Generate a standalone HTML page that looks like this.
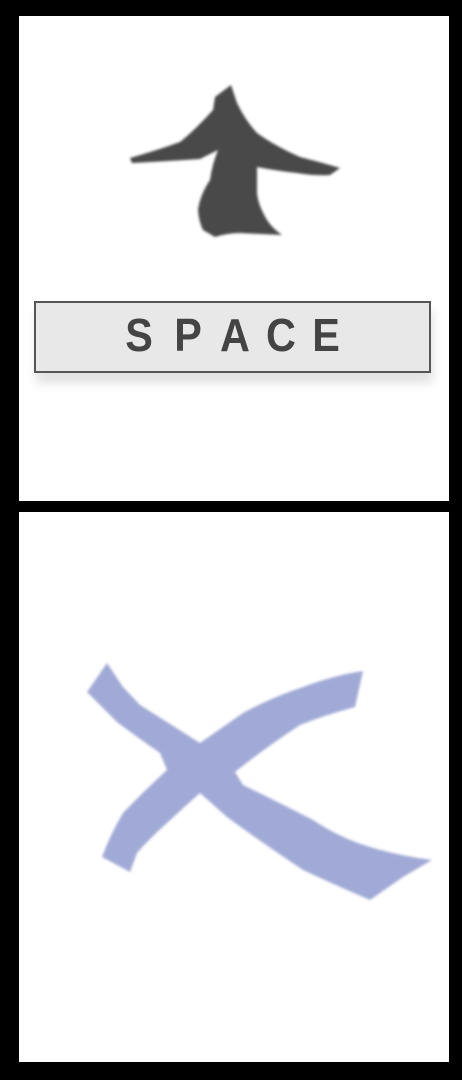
<!DOCTYPE html>
<html><head><style>
html,body{margin:0;padding:0;background:#000;width:462px;height:1080px;overflow:hidden;position:relative}
.p{position:absolute;background:#fff}
.btn{position:absolute;left:34px;top:301px;width:393px;height:68px;background:#e8e8e8;border:2px solid #555;box-shadow:2px 10px 10px rgba(0,0,0,0.12)}
.l{position:absolute;top:9px;width:40px;margin-left:-20px;text-align:center;font-family:"Liberation Sans",sans-serif;font-weight:bold;font-size:46px;line-height:46px;color:#444;transform:scaleX(0.9)}
</style></head><body>
<div class="p" style="left:19px;top:16px;width:430px;height:485px"></div>
<div class="p" style="left:19px;top:512px;width:430px;height:550px"></div>
<svg width="462" height="1080" style="position:absolute;left:0;top:0">
<defs><filter id="b"><feGaussianBlur stdDeviation="1.2"/></filter></defs>
<path filter="url(#b)" fill="#484848" d="M231,85 L215,97 L213,110 Q195,130 180,142 Q155,151 130,158 L132,163 Q170,161 200,159 L218,150 Q212,165 210,180 Q200,195 198,210 Q199,222 203,230 L215,237 Q228,233 240,233 Q262,234 282,235 Q272,228 267,220 Q258,205 257,193 L257,167 Q278,171 297,173 Q315,176 330,175 L340,168 Q320,162 300,157 Q275,146 257,133 Q245,120 237,103 Z"/>
<path filter="url(#b)" fill="#a1aad6" d="M107,663 L123,687 L140,705 L200,743 L243,713 Q270,698 303,687 Q335,675 363,671 L355,707 Q325,715 300,725 Q265,748 235,772 L243,785 Q280,803 313,820 Q340,838 370,847 Q400,856 432,860 L403,877 L370,900 Q335,885 303,870 Q265,845 227,817 L200,793 Q183,808 167,823 Q150,838 137,853 L130,872 L102,857 Q110,835 123,813 Q145,790 167,770 L160,753 Q138,738 117,722 Q100,705 87,692 Z"/>
</svg>
<div class="btn">
<span class="l" style="left:103px">S</span>
<span class="l" style="left:152px">P</span>
<span class="l" style="left:199px">A</span>
<span class="l" style="left:245px">C</span>
<span class="l" style="left:290px">E</span>
</div>
</body></html>
